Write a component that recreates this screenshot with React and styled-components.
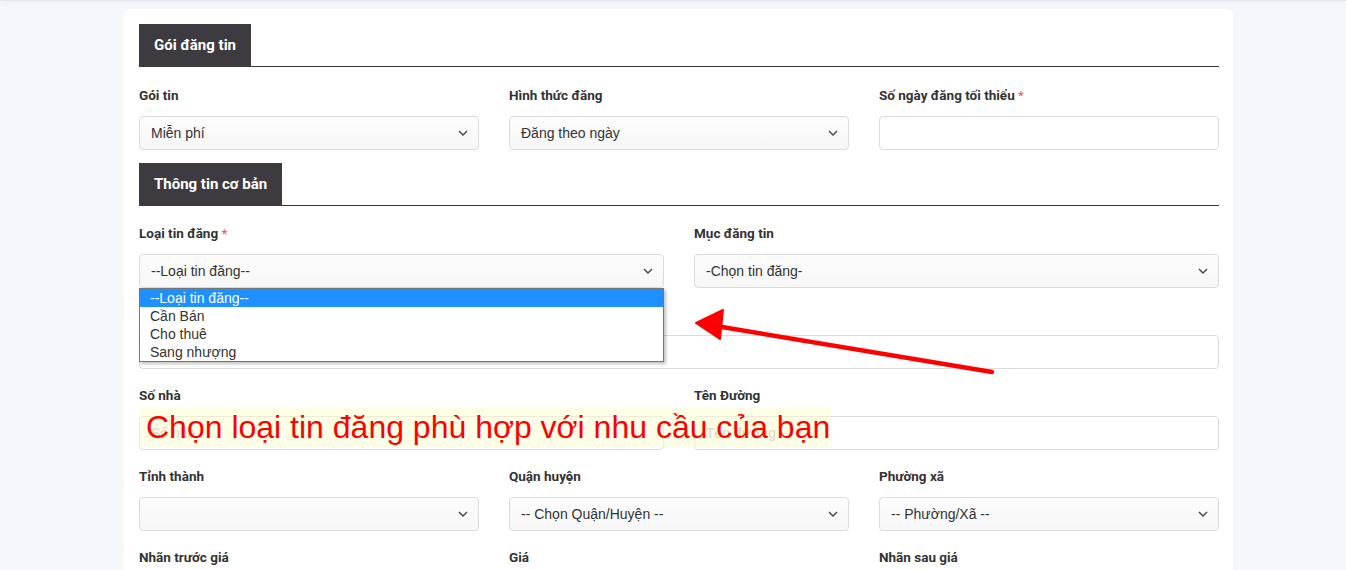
import React from 'react';
import styled, { createGlobalStyle } from 'styled-components';

const GlobalStyle = createGlobalStyle`
  * { box-sizing: border-box; }
  body {
    margin: 0;
    background: #f4f7fb;
    font-family: Roboto, "Noto Sans", sans-serif;
    color: #333;
  }
`;

const Chevron = () => (
  <svg width='10' height='6' viewBox='0 0 10 6' fill='none'>
    <polyline points='1,1 5,5 9,1' stroke='#444' strokeWidth='1.4' />
  </svg>
);

const App = () => {
  return (
    <>
      <GlobalStyle />
      <TopBar />
      <Page>
        <Card>
          <SectionHeader>
            <Tab>Gói đăng tin</Tab>
          </SectionHeader>
          <Row $cols={3} $gap={13}>
            <Group>
              <Label>Gói tin</Label>
              <Select>
                <span>Miễn phí</span>
                <Chevron />
              </Select>
            </Group>
            <Group>
              <Label>Hình thức đăng</Label>
              <Select>
                <span>Đăng theo ngày</span>
                <Chevron />
              </Select>
            </Group>
            <Group>
              <Label>
                Số ngày đăng tối thiểu <Req>*</Req>
              </Label>
              <Input />
            </Group>
          </Row>

          <SectionHeader $mb={19}>
            <Tab>Thông tin cơ bản</Tab>
          </SectionHeader>
          <Row $cols={2}>
            <Group>
              <Label>
                Loại tin đăng <Req>*</Req>
              </Label>
              <SelectWrap>
                <Select>
                  <span>--Loại tin đăng--</span>
                  <Chevron />
                </Select>
                <OptionList>
                  <Option $active>--Loại tin đăng--</Option>
                  <Option>Cần Bán</Option>
                  <Option>Cho thuê</Option>
                  <Option>Sang nhượng</Option>
                </OptionList>
              </SelectWrap>
            </Group>
            <Group>
              <Label>Mục đăng tin</Label>
              <Select>
                <span>-Chọn tin đăng-</span>
                <Chevron />
              </Select>
            </Group>
          </Row>
          <Row $cols={1}>
            <Group>
              <Label>Tiêu đề</Label>
              <Input />
            </Group>
          </Row>
          <Row $cols={2}>
            <Group>
              <Label>Số nhà</Label>
              <Input>
                <Placeholder>Số nhà</Placeholder>
              </Input>
            </Group>
            <Group>
              <Label>Tên Đường</Label>
              <Input>
                <Placeholder>Tên đường</Placeholder>
              </Input>
            </Group>
          </Row>
          <Row $cols={3}>
            <Group>
              <Label>Tỉnh thành</Label>
              <Select>
                <span />
                <Chevron />
              </Select>
            </Group>
            <Group>
              <Label>Quận huyện</Label>
              <Select>
                <span>-- Chọn Quận/Huyện --</span>
                <Chevron />
              </Select>
            </Group>
            <Group>
              <Label>Phường xã</Label>
              <Select>
                <span>-- Phường/Xã --</span>
                <Chevron />
              </Select>
            </Group>
          </Row>
          <Row $cols={3}>
            <Group>
              <Label>Nhãn trước giá</Label>
              <Input />
            </Group>
            <Group>
              <Label>Giá</Label>
              <Input />
            </Group>
            <Group>
              <Label>Nhãn sau giá</Label>
              <Input />
            </Group>
          </Row>

          {/* annotation drawn over the form */}
          <Caption>Chọn loại tin đăng phù hợp với nhu cầu của bạn</Caption>
          <Arrow width='320' height='70' viewBox='0 0 320 70'>
            <line x1='26' y1='17' x2='296' y2='62' stroke='#ff0000' strokeWidth='4.5' strokeLinecap='round' />
            <polygon points='0,13 27,0 24,29' fill='#ff0000' stroke='#ff0000' strokeWidth='2' strokeLinejoin='round' />
          </Arrow>
        </Card>
      </Page>
    </>
  );
};

const TopBar = styled.div`
  height: 1px;
  background: #e4e6ea;
  box-shadow: 0 1px 6px rgba(0, 0, 0, 0.14);
  position: relative;
  z-index: 1;
`;

const Page = styled.div`
  padding: 8px 113px 0 124px;
  height: 569px;
  overflow: hidden;
`;

const Card = styled.div`
  position: relative;
  background: #fff;
  border-radius: 6px;
  padding: 15px 14px 20px 15px;
  min-height: 600px;
`;

const SectionHeader = styled.div`
  display: flex;
  border-bottom: 1px solid #3a3a3a;
  margin-bottom: ${(p) => p.$mb || 20}px;
`;

const Tab = styled.div`
  height: 42px;
  display: flex;
  align-items: center;
  padding: 0 15px;
  background: #3d3b40;
  color: #fff;
  font-weight: 700;
  font-size: 15px;
`;

const Row = styled.div`
  display: grid;
  grid-template-columns: repeat(${(p) => p.$cols}, 1fr);
  column-gap: 30px;
  margin-bottom: ${(p) => (p.$gap !== undefined ? p.$gap : 18)}px;
`;

const Group = styled.div`
  display: flex;
  flex-direction: column;
`;

const Label = styled.label`
  font-size: 13.5px;
  font-weight: 700;
  line-height: 16px;
  margin-bottom: 13px;
  color: #333;
`;

const Req = styled.span`
  color: #e85a5a;
  font-weight: 400;
`;

const fieldBase = `
  height: 34px;
  border: 1px solid #dcdcdc;
  border-radius: 4px;
  display: flex;
  align-items: center;
  padding: 0 11px;
  font-family: "Liberation Sans", Arial, sans-serif;
  font-size: 14px;
  color: #333;
`;

const Select = styled.div`
  ${fieldBase}
  justify-content: space-between;
  background: linear-gradient(#fcfcfc, #f7f7f7);
  padding-right: 10px;
`;

const Input = styled.div`
  ${fieldBase}
  background: #fff;
`;

const Placeholder = styled.span`
  color: #b8b8b8;
`;

const SelectWrap = styled.div`
  position: relative;
`;

const OptionList = styled.div`
  position: absolute;
  top: 34px;
  left: 0;
  right: 0;
  z-index: 5;
  background: #fff;
  border: 1px solid #767676;
  box-shadow: 2px 2px 3px rgba(0, 0, 0, 0.25);
  font-family: "Liberation Sans", Arial, sans-serif;
  font-size: 14px;
`;

const Option = styled.div`
  height: 18px;
  line-height: 18px;
  padding-left: 10px;
  background: ${(p) => (p.$active ? '#1e90ff' : '#fff')};
  color: ${(p) => (p.$active ? '#fff' : '#333')};
`;

const Caption = styled.div`
  position: absolute;
  left: 15px;
  top: 398px;
  width: 692px;
  height: 40px;
  padding-left: 7px;
  background: rgba(255, 255, 205, 0.45);
  color: #ff0000;
  font-family: "Liberation Sans", Arial, sans-serif;
  font-size: 32px;
  line-height: 40px;
  white-space: nowrap;
  z-index: 4;
`;

const Arrow = styled.svg`
  position: absolute;
  left: 572px;
  top: 301px;
  z-index: 6;
  overflow: visible;
`;

export default App;
